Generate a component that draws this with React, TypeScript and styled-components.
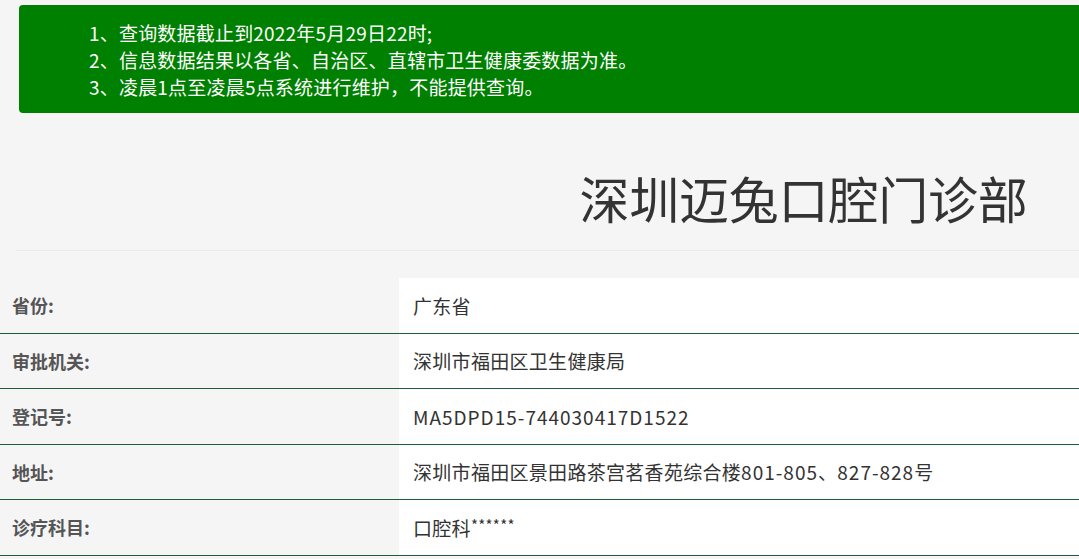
import React from "react";
import styled, { createGlobalStyle } from "styled-components";

const Global = createGlobalStyle`
  html, body {
    margin: 0;
    padding: 0;
    background: #f5f5f5;
    overflow: hidden;
  }
  body {
    font-family: "Noto Sans CJK SC", "Noto Sans", sans-serif;
    color: #333;
  }
`;

const Page = styled.div`
  width: 1566px;
`;

const Notice = styled.div`
  margin: 5px 0 0 19px;
  background: #008000;
  border-radius: 4px;
  padding: 14px 0 13px 70px;
  color: #fff;
  font-size: 19px;
  line-height: 27px;
`;

const NoticeLine = styled.div`
  white-space: nowrap;
  letter-spacing: 0.2px;
`;

const Header = styled.div`
  margin-left: 16px;
  width: 1572px;
  padding: 58px 0 27px;
  border-bottom: 1px solid #ebebeb;
  display: flex;
  justify-content: center;
`;

const Title = styled.h1`
  margin: 0 0 0 3px;
  font-size: 50px;
  line-height: 52px;
  font-weight: 400;
  color: #333;
  letter-spacing: -0.2px;
`;

const Table = styled.div`
  margin-top: 27px;
  display: grid;
  grid-template-columns: 399px 1fr;
`;

const Label = styled.div`
  height: 54.5px;
  display: flex;
  align-items: center;
  padding-left: 12px;
  font-size: 18px;
  font-weight: 700;
  color: #555;
  border-bottom: 1px solid #1b5e3b;
  background: #f5f5f5;
`;

const Value = styled.div`
  height: 54.5px;
  display: flex;
  align-items: center;
  padding-left: 14px;
  font-size: 19px;
  letter-spacing: 0.3px;
  color: #333;
  background: #fff;
  border-bottom: 1px solid #1b5e3b;
  white-space: nowrap;
`;

const Latin = styled.span`
  letter-spacing: 1px;
`;

const Stars = styled.span`
  font-size: 15px;
  align-self: flex-start;
  margin-top: 14px;
`;

const rows: { label: string; value: React.ReactNode }[] = [
  { label: "省份:", value: "广东省" },
  { label: "审批机关:", value: "深圳市福田区卫生健康局" },
  { label: "登记号:", value: <Latin>MA5DPD15-744030417D1522</Latin> },
  {
    label: "地址:",
    value: (
      <>
        深圳市福田区景田路茶宫茗香苑综合楼<Latin>801-805</Latin>、<Latin>827-828</Latin>号
      </>
    ),
  },
  {
    label: "诊疗科目:",
    value: (
      <>
        口腔科<Stars>******</Stars>
      </>
    ),
  },
];

export default function App() {
  return (
    <Page>
      <Global />
      <Notice>
        <NoticeLine>1、查询数据截止到2022年5月29日22时;</NoticeLine>
        <NoticeLine>2、信息数据结果以各省、自治区、直辖市卫生健康委数据为准。</NoticeLine>
        <NoticeLine>3、凌晨1点至凌晨5点系统进行维护，不能提供查询。</NoticeLine>
      </Notice>
      <Header>
        <Title>深圳迈兔口腔门诊部</Title>
      </Header>
      <Table>
        {rows.map((r) => (
          <React.Fragment key={r.label}>
            <Label>{r.label}</Label>
            <Value>{r.value}</Value>
          </React.Fragment>
        ))}
      </Table>
    </Page>
  );
}
